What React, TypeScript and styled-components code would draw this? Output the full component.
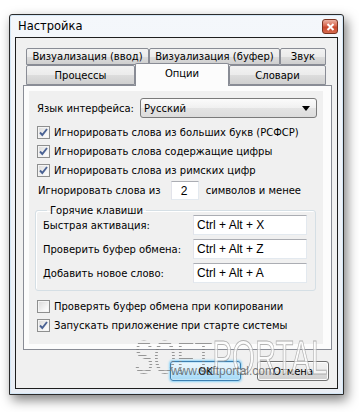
import React from 'react';
import styled, { createGlobalStyle } from 'styled-components';

const GlobalStyle = createGlobalStyle`
  body {
    margin: 0;
    background: #fff;
    font-family: "DejaVu Sans", "Liberation Sans", sans-serif;
    font-size: 10px;
    color: #000;
  }
`;

const topTabs = [
  { label: 'Визуализация (ввод)', w: 123 },
  { label: 'Визуализация (буфер)', w: 131 },
  { label: 'Звук', w: 46 },
];

const bottomTabs = [
  { label: 'Процессы', w: 109, active: false },
  { label: 'Опции', w: 94, active: true },
  { label: 'Словари', w: 97, active: false },
];

const hotkeys = [
  { label: 'Быстрая активация:', value: 'Ctrl + Alt + X' },
  { label: 'Проверить буфер обмена:', value: 'Ctrl + Alt + Z' },
  { label: 'Добавить новое слово:', value: 'Ctrl + Alt + A' },
];

const CheckBox = ({ checked }: { checked: boolean }) => (
  <Box>
    {checked && (
      <svg width="11" height="11" viewBox="0 0 11 11">
        <path d="M2 5.5 L4.3 8 L9 2" fill="none" stroke="#4a6294" strokeWidth="1.9" />
      </svg>
    )}
  </Box>
);

const Check = ({ checked, children }: { checked: boolean; children: React.ReactNode }) => (
  <CheckRow>
    <CheckBox checked={checked} />
    <span>{children}</span>
  </CheckRow>
);

const App = () => {
  return (
    <>
      <GlobalStyle />
      <Page>
        <Window>
          <TitleBar>
            <Title>Настройка</Title>
            <CloseButton>
              <svg width="9" height="8" viewBox="0 0 9 8">
                <path d="M1.5 1 L7.5 7 M7.5 1 L1.5 7" stroke="#fff" strokeWidth="2" />
              </svg>
            </CloseButton>
          </TitleBar>
          <Client>
            <TabRow>
              {topTabs.map((t) => (
                <Tab key={t.label} $w={t.w}>{t.label}</Tab>
              ))}
            </TabRow>
            <TabRow $second>
              {bottomTabs.map((t) => (
                <Tab key={t.label} $w={t.w} $active={t.active}>{t.label}</Tab>
              ))}
            </TabRow>
            <TabPanel>
              <Options>
                <LangRow>
                  <span>Язык интерфейса:</span>
                  <Select>
                    <span>Русский</span>
                    <svg width="8" height="5" viewBox="0 0 8 5">
                      <path d="M0 0 H8 L4 5 Z" fill="#000" />
                    </svg>
                  </Select>
                </LangRow>
                <CheckList>
                  <Check checked>Игнорировать слова из больших букв (РСФСР)</Check>
                  <Check checked>Игнорировать слова содержащие цифры</Check>
                  <Check checked>Игнорировать слова из римских цифр</Check>
                </CheckList>
                <NumRow>
                  <span>Игнорировать слова из</span>
                  <SmallInput>2</SmallInput>
                  <span>символов и менее</span>
                </NumRow>
                <Group>
                  <Legend>Горячие клавиши</Legend>
                  <HotkeyGrid>
                    {hotkeys.map((h) => (
                      <React.Fragment key={h.label}>
                        <span>{h.label}</span>
                        <TextBox>{h.value}</TextBox>
                      </React.Fragment>
                    ))}
                  </HotkeyGrid>
                </Group>
                <CheckList $top={6}>
                  <Check checked={false}>Проверять буфер обмена при копировании</Check>
                  <Check checked>Запускать приложение при старте системы</Check>
                </CheckList>
              </Options>
            </TabPanel>
            <ButtonRow>
              <Button $default $w={71}>OK</Button>
              <Button $w={72}>Отмена</Button>
            </ButtonRow>
          </Client>
          <Watermark>
            <Dotted>SOFT</Dotted>
            <Outlined>PORTAL</Outlined>
          </Watermark>
          <WatermarkUrl>www.softportal.com</WatermarkUrl>
        </Window>
      </Page>
    </>
  );
};

const Page = styled.div`
  padding: 14px 0 0 9px;
  height: 412px;
  box-sizing: border-box;
`;

const Window = styled.div`
  position: relative;
  width: 335px;
  height: 381px;
  box-sizing: border-box;
  border: 1px solid #2b2b2b;
  border-radius: 3px 3px 0 0;
  background: linear-gradient(#f4f7fb, #e9eef5);
  box-shadow: inset 0 0 0 1px #d4e7f7, 3px 5px 12px rgba(0, 0, 0, 0.5);
  display: flex;
  flex-direction: column;
`;

const TitleBar = styled.div`
  height: 22px;
  display: flex;
  align-items: center;
  justify-content: space-between;
  padding: 0 5px 0 8px;
`;

const Title = styled.div`
  font-size: 11.5px;
`;

const CloseButton = styled.div`
  width: 16px;
  height: 15px;
  box-sizing: border-box;
  border: 1px solid #7a3422;
  border-radius: 3px;
  background: linear-gradient(#eab1a2, #d9674f 45%, #c8472c 55%, #d66a4e);
  display: flex;
  align-items: center;
  justify-content: center;
  margin-top: 1px;
`;

const Client = styled.div`
  flex: 1;
  margin: 0 5px 5px 5px;
  border: 1px solid #1e1e1e;
  background: #f0f0f0;
  padding: 10px 5px 0 7px;
  display: flex;
  flex-direction: column;
`;

const TabRow = styled.div<{ $second?: boolean }>`
  display: flex;
  align-items: flex-end;
  padding-left: 3px;
  height: ${(p) => (p.$second ? 20 : 17)}px;
`;

const Tab = styled.div<{ $w: number; $active?: boolean }>`
  width: ${(p) => p.$w}px;
  box-sizing: border-box;
  height: ${(p) => (p.$active ? '23px' : '100%')};
  margin-bottom: ${(p) => (p.$active ? -1 : 0)}px;
  border: 1px solid #898c95;
  border-bottom: ${(p) => (p.$active ? 'none' : '1px solid #898c95')};
  border-radius: 2px 2px 0 0;
  background: ${(p) =>
    p.$active ? '#fcfcfc' : 'linear-gradient(#f2f2f2, #ebebeb 50%, #dddddd 50%, #cfcfcf)'};
  display: flex;
  justify-content: center;
  align-items: ${(p) => (p.$active ? 'flex-start' : 'center')};
  padding-top: ${(p) => (p.$active ? 4 : 0)}px;
  white-space: nowrap;
  z-index: ${(p) => (p.$active ? 2 : 0)};
`;

const TabPanel = styled.div`
  width: 309px;
  height: 265px;
  box-sizing: border-box;
  border: 1px solid #898c95;
  background: #fcfcfc;
  padding: 5px 8px 5px 5px;
  position: relative;
  z-index: 1;
`;

const Options = styled.div`
  height: 100%;
  background: #f0f0f0;
  display: flex;
  flex-direction: column;
  padding-top: 7px;
  box-sizing: border-box;
`;

const LangRow = styled.div`
  display: flex;
  align-items: center;
  justify-content: space-between;
  padding: 0 6px 0 8px;
  height: 20px;
`;

const Select = styled.div`
  width: 177px;
  height: 20px;
  box-sizing: border-box;
  border: 1px solid #7a7a7a;
  border-radius: 3px;
  background: linear-gradient(#fbfbfb, #f0f0f0 50%, #e4e4e4 50%, #dcdcdc);
  display: flex;
  align-items: center;
  justify-content: space-between;
  padding: 0 6px 0 3px;
`;

const CheckList = styled.div<{ $top?: number }>`
  display: flex;
  flex-direction: column;
  margin-top: ${(p) => p.$top ?? 5}px;
`;

const CheckRow = styled.div`
  display: flex;
  align-items: center;
  gap: 4px;
  height: 19px;
  padding-left: 8px;
  white-space: nowrap;
`;

const Box = styled.div`
  width: 13px;
  height: 13px;
  box-sizing: border-box;
  border: 1px solid #8e8f8f;
  background: linear-gradient(135deg, #d8d8d8, #f7f7f7 70%, #ffffff);
  box-shadow: inset 0 0 0 1px #f4f4f4;
  display: flex;
  align-items: center;
  justify-content: center;
`;

const NumRow = styled.div`
  display: flex;
  align-items: center;
  height: 19px;
  margin-top: 1px;
  padding-left: 9px;
  white-space: nowrap;
`;

const TextBox = styled.div`
  height: 20px;
  box-sizing: border-box;
  border: 1px solid;
  border-color: #abadb3 #e3e9ef #e3e9ef #e2e3ea;
  background: #fff;
  display: flex;
  align-items: center;
  padding-left: 3px;
  font-family: "Liberation Sans", sans-serif;
  font-size: 12px;
`;

const SmallInput = styled(TextBox)`
  width: 28px;
  height: 19px;
  margin: 0 7px 0 10px;
  padding-left: 9px;
`;

const Group = styled.fieldset`
  margin: 5px 7px 0 6px;
  padding: 0 8px 7px 7px;
  border: 1px solid #d5dfe5;
  border-radius: 3px;
  box-shadow: inset 1px 1px 0 #fff;
`;

const Legend = styled.legend`
  padding: 0 3px;
  margin-left: 4px;
`;

const HotkeyGrid = styled.div`
  display: grid;
  grid-template-columns: 1fr 114px;
  row-gap: 4px;
  align-items: center;
  margin-top: -1px;
`;

const ButtonRow = styled.div`
  display: flex;
  justify-content: flex-end;
  gap: 16px;
  margin-top: 11px;
  padding-right: 3px;
`;

const Button = styled.div<{ $w: number; $default?: boolean }>`
  width: ${(p) => p.$w}px;
  height: 20px;
  box-sizing: border-box;
  border: 1px solid ${(p) => (p.$default ? '#3c7fb1' : '#707070')};
  border-radius: 3px;
  background: ${(p) =>
    p.$default
      ? 'linear-gradient(#eaf6fd, #d9f0fc 50%, #bee6fd 50%, #a7d9f5)'
      : 'linear-gradient(#f2f2f2, #ebebeb 50%, #dddddd 50%, #cfcfcf)'};
  box-shadow: ${(p) => (p.$default ? '0 0 2px 1px #8fd3f7, inset 0 0 0 1px #c4e6f8' : 'inset 0 0 0 1px #fcfcfc')};
  display: flex;
  align-items: center;
  justify-content: center;
`;

const Watermark = styled.div`
  position: absolute;
  left: 124px;
  top: 318px;
  display: flex;
  font-family: "Liberation Sans", sans-serif;
  font-size: 49px;
  line-height: 1;
  transform: scaleX(0.6);
  transform-origin: left top;
  pointer-events: none;
  z-index: 5;
`;

const Dotted = styled.span`
  color: transparent;
  background: radial-gradient(circle, rgba(120, 120, 120, 0.75) 0.9px, transparent 1.1px) 0 0 / 3px 3px;
  -webkit-background-clip: text;
  background-clip: text;
`;

const Outlined = styled.span`
  color: rgba(255, 255, 255, 0.7);
  -webkit-text-stroke: 1px rgba(160, 160, 160, 0.8);
`;

const WatermarkUrl = styled.div`
  position: absolute;
  left: 161px;
  top: 349px;
  font-family: "Liberation Sans", sans-serif;
  font-size: 12px;
  color: rgba(80, 80, 80, 0.75);
  pointer-events: none;
  z-index: 5;
`;

export default App;
